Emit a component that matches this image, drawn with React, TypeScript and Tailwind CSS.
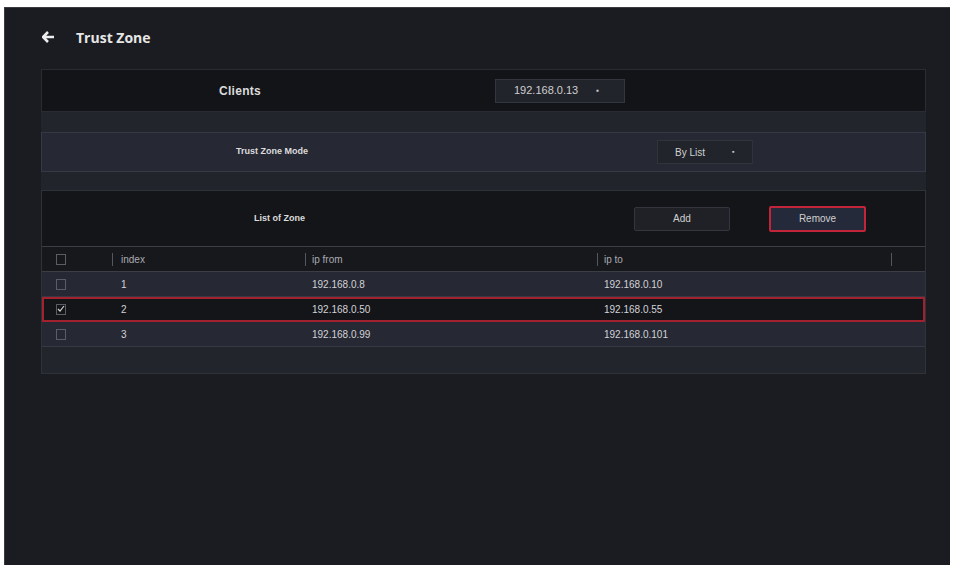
import React from "react";

const rows = [
  { i: "1", from: "192.168.0.8", to: "192.168.0.10", sel: false },
  { i: "2", from: "192.168.0.50", to: "192.168.0.55", sel: true },
  { i: "3", from: "192.168.0.99", to: "192.168.0.101", sel: false },
];

function Box({ checked }: { checked?: boolean }) {
  return (
    <div className="w-[10px] h-[11px] border border-[#5a5d66] flex items-center justify-center">
      {checked && (
        <svg width="8" height="8" viewBox="0 0 8 8"><path d="M1 4l2 2 4-5" stroke="#d0d0d0" strokeWidth="1.2" fill="none" /></svg>
      )}
    </div>
  );
}

export default function App() {
  return (
    <div className="w-[953px] h-[565px] bg-white pt-[7px] pl-[4px] pr-[3px]" style={{ fontFamily: "'Liberation Sans', Arial, sans-serif" }}>
      <div className="h-[558px] bg-[#1b1c21] border-l border-t border-[#3a3b40] pt-[19px]">
        <div className="flex items-center h-[20px] pl-[37px] gap-[21px] text-[#e6e6e6]">
          <svg width="13" height="12" viewBox="0 0 13 12"><path d="M6 1L1 6l5 5M1.5 6H12" stroke="#ededed" strokeWidth="2.6" fill="none" /></svg>
          <span className="text-[14px] font-bold" style={{ fontFamily: "'Open Sans', sans-serif" }}>Trust Zone</span>
        </div>
        <div className="mx-[36px] mt-[22px] w-[885px]">
          <div className="h-[43px] bg-[#131418] border border-[#2a2c33] flex items-center">
            <div className="w-[396px] text-center text-[12px] font-bold text-[#dcdcdc] tracking-wide">Clients</div>
            <div className="ml-[57px] w-[130px] h-[24px] bg-[#22242b] border border-[#33363e] flex items-center text-[11px] text-[#cfcfcf]">
              <span className="ml-[18px]">192.168.0.13</span>
              <span className="ml-[18px] text-[8px]">▪</span>
            </div>
          </div>
          <div className="h-[20px] bg-[#23252d]" />
          <div className="h-[40px] bg-[#262834] border border-[#363944] flex items-center">
            <div className="w-[460px] text-center text-[9px] font-bold text-[#dcdcdc]">Trust Zone Mode</div>
            <div className="ml-[155px] w-[96px] h-[24px] bg-[#22242c] border border-[#30333c] flex items-center text-[10px] text-[#d0d0d0]">
              <span className="ml-[17px]">By List</span>
              <span className="ml-[27px] text-[7px]">▪</span>
            </div>
          </div>
          <div className="h-[18px] bg-[#22242b]" />
          <div className="bg-[#23252c] border border-[#30323a] pb-[26px]">
            <div className="h-[55px] bg-[#141519] flex items-center">
              <div className="w-[475px] text-center text-[9px] font-bold text-[#dcdcdc]">List of Zone</div>
              <div className="ml-[117px] w-[96px] h-[24px] bg-[#1f2127] border border-[#33363e] rounded-[2px] flex items-center justify-center text-[10px] text-[#cfcfcf]">Add</div>
              <div className="ml-[39px] w-[97px] h-[26px] bg-[#252a3a] border-2 border-[#c2243a] rounded-[2px] flex items-center justify-center text-[10px] text-[#cfcfcf]">Remove</div>
            </div>
            <div className="h-[26px] bg-[#17181c] border-t border-b border-[#3c3e46] flex items-center text-[10px] text-[#a9abb2]">
              <div className="w-[70px] pl-[14px]"><Box /></div>
              <div className="w-[193px] border-l border-[#55575e] pl-[8px] h-[13px] leading-[13px]">index</div>
              <div className="w-[292px] border-l border-[#55575e] pl-[6px] h-[13px] leading-[13px]">ip from</div>
              <div className="w-[295px] border-l border-[#55575e] border-r pl-[6px] h-[13px] leading-[13px]">ip to</div>
            </div>
            {rows.map((r) => (
              <div key={r.i} className={`h-[25px] flex items-center text-[10px] text-[#d2d3d8] border-b border-[#363944] ${r.sel ? "bg-[#141519] outline-2 -outline-offset-2 outline-[#a3202f]" : "bg-[#262833]"}`}>
                <div className="w-[70px] pl-[14px]"><Box checked={r.sel} /></div>
                <div className="w-[193px] pl-[9px]">{r.i}</div>
                <div className="w-[292px] pl-[7px]">{r.from}</div>
                <div className="w-[295px] pl-[7px]">{r.to}</div>
              </div>
            ))}
          </div>
        </div>
      </div>
    </div>
  );
}
